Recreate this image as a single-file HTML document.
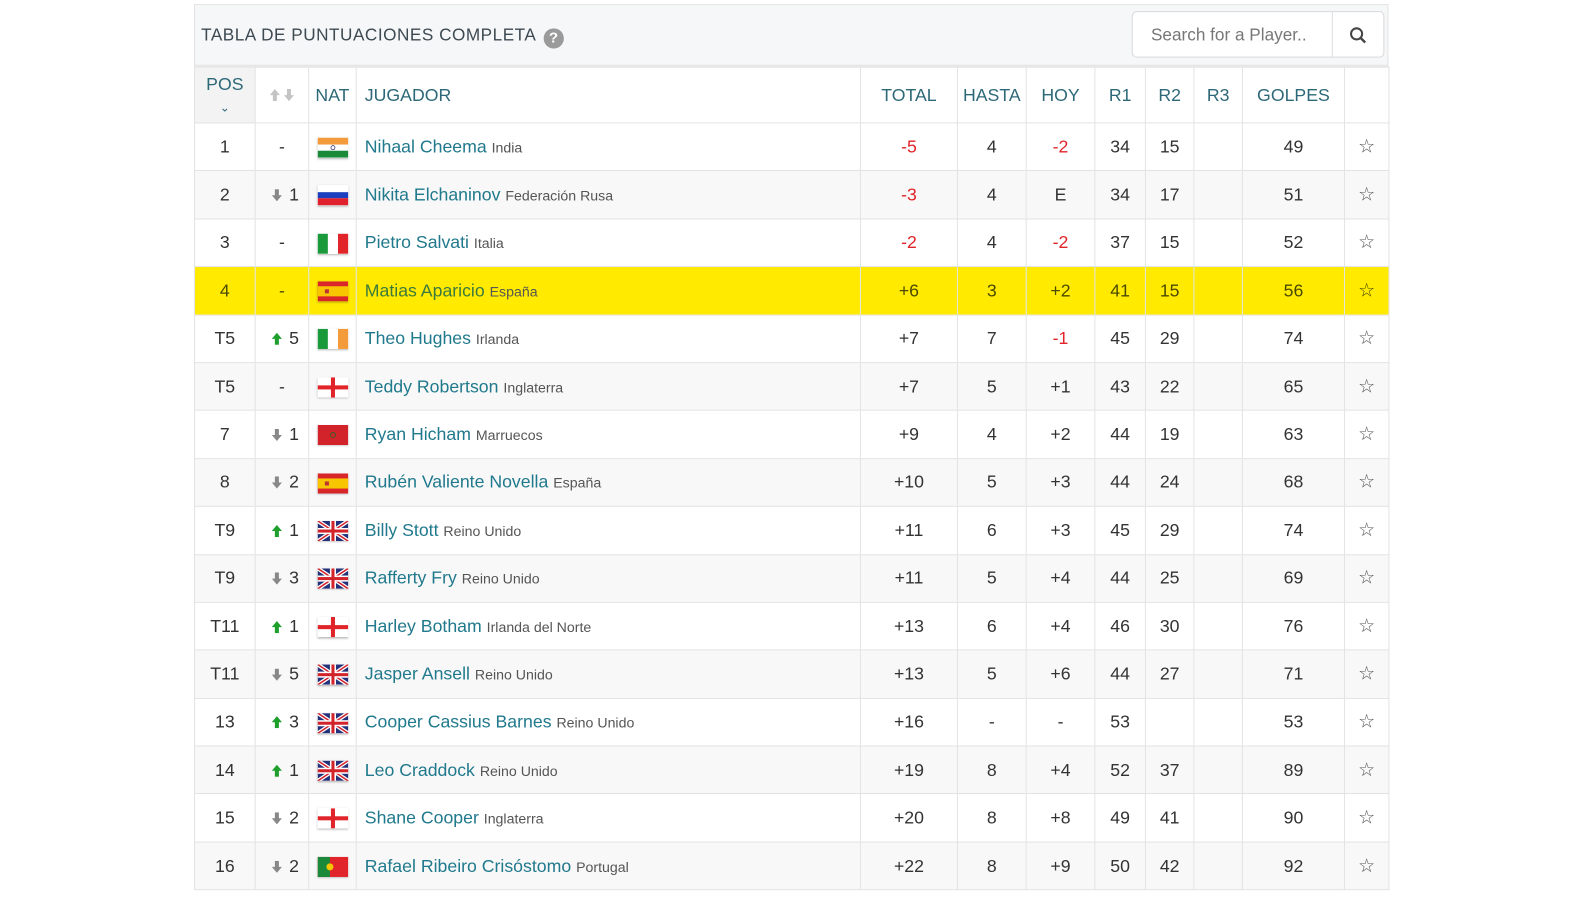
<!DOCTYPE html>
<html><head><meta charset="utf-8"><style>
body{margin:0;width:1585px;height:892px;background:#fff;font-family:"Liberation Sans",Arial,sans-serif;overflow:hidden;position:relative}
.scale{position:absolute;left:0;top:0;width:1585px;height:892px;transform:scale(1.0105,1.0115);transform-origin:0 0}
.wrap{position:absolute;left:192px;top:4px;width:1182px}
.top{height:59px;background:#f6f7f8;border:1px solid #e4e4e4;border-bottom:2px solid #e6e6e6;position:relative}
.title{position:absolute;left:6px;top:20px;font-size:17px;color:#3d4a52;letter-spacing:0.5px}
.q{display:inline-block;width:20px;height:20px;border-radius:50%;background:#9a9a9a;color:#fff;font-size:15px;font-weight:bold;text-align:center;line-height:20px;vertical-align:-2px;margin-left:3px}
.search{position:absolute;left:927px;top:6px;width:248px;height:44px;border:1px solid #d9d9d9;border-radius:5px;background:#fff}
.search span{position:absolute;left:18px;top:13px;font-size:17px;color:#777}
.search .b{position:absolute;left:197px;top:0;width:1px;height:44px;background:#ddd}
table{border-collapse:collapse;width:1182px;table-layout:fixed}
td,th{border:1px solid #e3e3e3;text-align:center;font-size:17.5px;color:#333;padding:0;height:46.4px;overflow:visible;white-space:nowrap}
th{height:54px;font-weight:normal;color:#2d6878;background:#fff}
th.pos{background:#f3f3f3}
tr.r:nth-child(odd) td{background:#f8f8f8}
td.n{text-align:left;padding-left:8px;color:#20798c}
td.n small{font-size:14px;color:#555}
.red{color:#e0242a}
tr.hl td{background:#ffea00!important;color:#4a4a00}
tr.hl td.n{color:#3b7a3c}
.ar{display:inline-block;width:24px;vertical-align:-1px}
svg.f{width:31px;height:20px;vertical-align:middle;box-shadow:0 1px 2px rgba(0,0,0,.3)}
.st{font-size:19px;color:#555}
</style></head><body>
<svg width="0" height="0" style="position:absolute"><defs>
<symbol id="u" viewBox="0 0 10 12"><path d="M5 0L10 6H7V12H3V6H0Z"/></symbol>
<symbol id="d" viewBox="0 0 10 12"><path d="M5 12L10 6H7V0H3V6H0Z"/></symbol>
<symbol id="in" viewBox="0 0 30 20"><rect width="30" height="7" fill="#f39a3a"/><rect y="7" width="30" height="6" fill="#fff"/><rect y="13" width="30" height="7" fill="#1a8a3a"/><circle cx="15" cy="10" r="2" fill="none" stroke="#226" stroke-width=".7"/></symbol>
<symbol id="ru" viewBox="0 0 30 20"><rect width="30" height="7" fill="#fff"/><rect y="7" width="30" height="6" fill="#1b3fbf"/><rect y="13" width="30" height="7" fill="#e0202a"/></symbol>
<symbol id="it" viewBox="0 0 30 20"><rect width="10" height="20" fill="#1a9a3a"/><rect x="10" width="10" height="20" fill="#fff"/><rect x="20" width="10" height="20" fill="#e0242a"/></symbol>
<symbol id="es" viewBox="0 0 30 20"><rect width="30" height="20" fill="#d9262a"/><rect y="5" width="30" height="10" fill="#f7c600"/><rect x="7" y="8" width="4" height="4" fill="#b33"/></symbol>
<symbol id="ie" viewBox="0 0 30 20"><rect width="10" height="20" fill="#1a9a3a"/><rect x="10" width="10" height="20" fill="#fff"/><rect x="20" width="10" height="20" fill="#f39a3a"/></symbol>
<symbol id="en" viewBox="0 0 30 20"><rect width="30" height="20" fill="#fff"/><rect x="13" width="4" height="20" fill="#e0242a"/><rect y="8" width="30" height="4" fill="#e0242a"/></symbol>
<symbol id="ma" viewBox="0 0 30 20"><rect width="30" height="20" fill="#d2232a"/><circle cx="15" cy="10" r="2.5" fill="none" stroke="#1a6a2a" stroke-width=".8"/></symbol>
<symbol id="gb" viewBox="0 0 30 20"><rect width="30" height="20" fill="#23307a"/><path d="M0 0L30 20M30 0L0 20" stroke="#fff" stroke-width="4"/><path d="M0 0L30 20M30 0L0 20" stroke="#d2232a" stroke-width="1.5"/><rect x="12" width="6" height="20" fill="#fff"/><rect y="7" width="30" height="6" fill="#fff"/><rect x="13.5" width="3" height="20" fill="#d2232a"/><rect y="8.5" width="30" height="3" fill="#d2232a"/></symbol>
<symbol id="pt" viewBox="0 0 30 20"><rect width="30" height="20" fill="#e0242a"/><rect width="12" height="20" fill="#1a8a3a"/><circle cx="12" cy="10" r="3.5" fill="#f7c600"/></symbol>
</defs></svg>
<div class="scale">
<div class="wrap">
<div class="top"><div class="title">TABLA DE PUNTUACIONES COMPLETA <span class="q">?</span></div>
<div class="search"><span>Search for a Player..</span><div class="b"></div><svg style="position:absolute;left:214px;top:14px" width="18" height="18" viewBox="0 0 18 18"><circle cx="7.5" cy="7.5" r="5.5" fill="none" stroke="#444" stroke-width="2"/><path d="M11.5 11.5L16 16" stroke="#444" stroke-width="2.4"/></svg></div></div>
<table>
<colgroup><col style="width:60px"><col style="width:53px"><col style="width:47px"><col style="width:499px"><col style="width:96px"><col style="width:68px"><col style="width:68px"><col style="width:50px"><col style="width:48px"><col style="width:48px"><col style="width:101px"><col style="width:44px"></colgroup>
<tr><th class="pos">POS<br><span style="font-size:12px;line-height:8px">&#8964;</span></th><th><svg width="10" height="12" fill="#c4c4c4"><use href="#u"/></svg> <svg width="10" height="12" fill="#c4c4c4"><use href="#d"/></svg></th><th>NAT</th><th style="text-align:left;padding-left:8px">JUGADOR</th><th>TOTAL</th><th>HASTA</th><th>HOY</th><th>R1</th><th>R2</th><th>R3</th><th>GOLPES</th><th></th></tr>
<tr class="r"><td>1</td><td>-</td><td><svg class="f"><use href="#in"/></svg></td><td class="n">Nihaal Cheema <small>India</small></td><td class="red">-5</td><td>4</td><td class="red">-2</td><td>34</td><td>15</td><td></td><td>49</td><td class="st">☆</td></tr>
<tr class="r"><td>2</td><td><svg class="ar" width="10" height="12" fill="#888"><use href="#d"/></svg>1</td><td><svg class="f"><use href="#ru"/></svg></td><td class="n">Nikita Elchaninov <small>Federación Rusa</small></td><td class="red">-3</td><td>4</td><td>E</td><td>34</td><td>17</td><td></td><td>51</td><td class="st">☆</td></tr>
<tr class="r"><td>3</td><td>-</td><td><svg class="f"><use href="#it"/></svg></td><td class="n">Pietro Salvati <small>Italia</small></td><td class="red">-2</td><td>4</td><td class="red">-2</td><td>37</td><td>15</td><td></td><td>52</td><td class="st">☆</td></tr>
<tr class="r hl"><td>4</td><td>-</td><td><svg class="f"><use href="#es"/></svg></td><td class="n">Matias Aparicio <small>España</small></td><td>+6</td><td>3</td><td>+2</td><td>41</td><td>15</td><td></td><td>56</td><td class="st">☆</td></tr>
<tr class="r"><td>T5</td><td><svg class="ar" width="10" height="12" fill="#1e9e2b"><use href="#u"/></svg>5</td><td><svg class="f"><use href="#ie"/></svg></td><td class="n">Theo Hughes <small>Irlanda</small></td><td>+7</td><td>7</td><td class="red">-1</td><td>45</td><td>29</td><td></td><td>74</td><td class="st">☆</td></tr>
<tr class="r"><td>T5</td><td>-</td><td><svg class="f"><use href="#en"/></svg></td><td class="n">Teddy Robertson <small>Inglaterra</small></td><td>+7</td><td>5</td><td>+1</td><td>43</td><td>22</td><td></td><td>65</td><td class="st">☆</td></tr>
<tr class="r"><td>7</td><td><svg class="ar" width="10" height="12" fill="#888"><use href="#d"/></svg>1</td><td><svg class="f"><use href="#ma"/></svg></td><td class="n">Ryan Hicham <small>Marruecos</small></td><td>+9</td><td>4</td><td>+2</td><td>44</td><td>19</td><td></td><td>63</td><td class="st">☆</td></tr>
<tr class="r"><td>8</td><td><svg class="ar" width="10" height="12" fill="#888"><use href="#d"/></svg>2</td><td><svg class="f"><use href="#es"/></svg></td><td class="n">Rubén Valiente Novella <small>España</small></td><td>+10</td><td>5</td><td>+3</td><td>44</td><td>24</td><td></td><td>68</td><td class="st">☆</td></tr>
<tr class="r"><td>T9</td><td><svg class="ar" width="10" height="12" fill="#1e9e2b"><use href="#u"/></svg>1</td><td><svg class="f"><use href="#gb"/></svg></td><td class="n">Billy Stott <small>Reino Unido</small></td><td>+11</td><td>6</td><td>+3</td><td>45</td><td>29</td><td></td><td>74</td><td class="st">☆</td></tr>
<tr class="r"><td>T9</td><td><svg class="ar" width="10" height="12" fill="#888"><use href="#d"/></svg>3</td><td><svg class="f"><use href="#gb"/></svg></td><td class="n">Rafferty Fry <small>Reino Unido</small></td><td>+11</td><td>5</td><td>+4</td><td>44</td><td>25</td><td></td><td>69</td><td class="st">☆</td></tr>
<tr class="r"><td>T11</td><td><svg class="ar" width="10" height="12" fill="#1e9e2b"><use href="#u"/></svg>1</td><td><svg class="f"><use href="#en"/></svg></td><td class="n">Harley Botham <small>Irlanda del Norte</small></td><td>+13</td><td>6</td><td>+4</td><td>46</td><td>30</td><td></td><td>76</td><td class="st">☆</td></tr>
<tr class="r"><td>T11</td><td><svg class="ar" width="10" height="12" fill="#888"><use href="#d"/></svg>5</td><td><svg class="f"><use href="#gb"/></svg></td><td class="n">Jasper Ansell <small>Reino Unido</small></td><td>+13</td><td>5</td><td>+6</td><td>44</td><td>27</td><td></td><td>71</td><td class="st">☆</td></tr>
<tr class="r"><td>13</td><td><svg class="ar" width="10" height="12" fill="#1e9e2b"><use href="#u"/></svg>3</td><td><svg class="f"><use href="#gb"/></svg></td><td class="n">Cooper Cassius Barnes <small>Reino Unido</small></td><td>+16</td><td>-</td><td>-</td><td>53</td><td></td><td></td><td>53</td><td class="st">☆</td></tr>
<tr class="r"><td>14</td><td><svg class="ar" width="10" height="12" fill="#1e9e2b"><use href="#u"/></svg>1</td><td><svg class="f"><use href="#gb"/></svg></td><td class="n">Leo Craddock <small>Reino Unido</small></td><td>+19</td><td>8</td><td>+4</td><td>52</td><td>37</td><td></td><td>89</td><td class="st">☆</td></tr>
<tr class="r"><td>15</td><td><svg class="ar" width="10" height="12" fill="#888"><use href="#d"/></svg>2</td><td><svg class="f"><use href="#en"/></svg></td><td class="n">Shane Cooper <small>Inglaterra</small></td><td>+20</td><td>8</td><td>+8</td><td>49</td><td>41</td><td></td><td>90</td><td class="st">☆</td></tr>
<tr class="r"><td>16</td><td><svg class="ar" width="10" height="12" fill="#888"><use href="#d"/></svg>2</td><td><svg class="f"><use href="#pt"/></svg></td><td class="n">Rafael Ribeiro Crisóstomo <small>Portugal</small></td><td>+22</td><td>8</td><td>+9</td><td>50</td><td>42</td><td></td><td>92</td><td class="st">☆</td></tr>
</table></div></div>
</body></html>
